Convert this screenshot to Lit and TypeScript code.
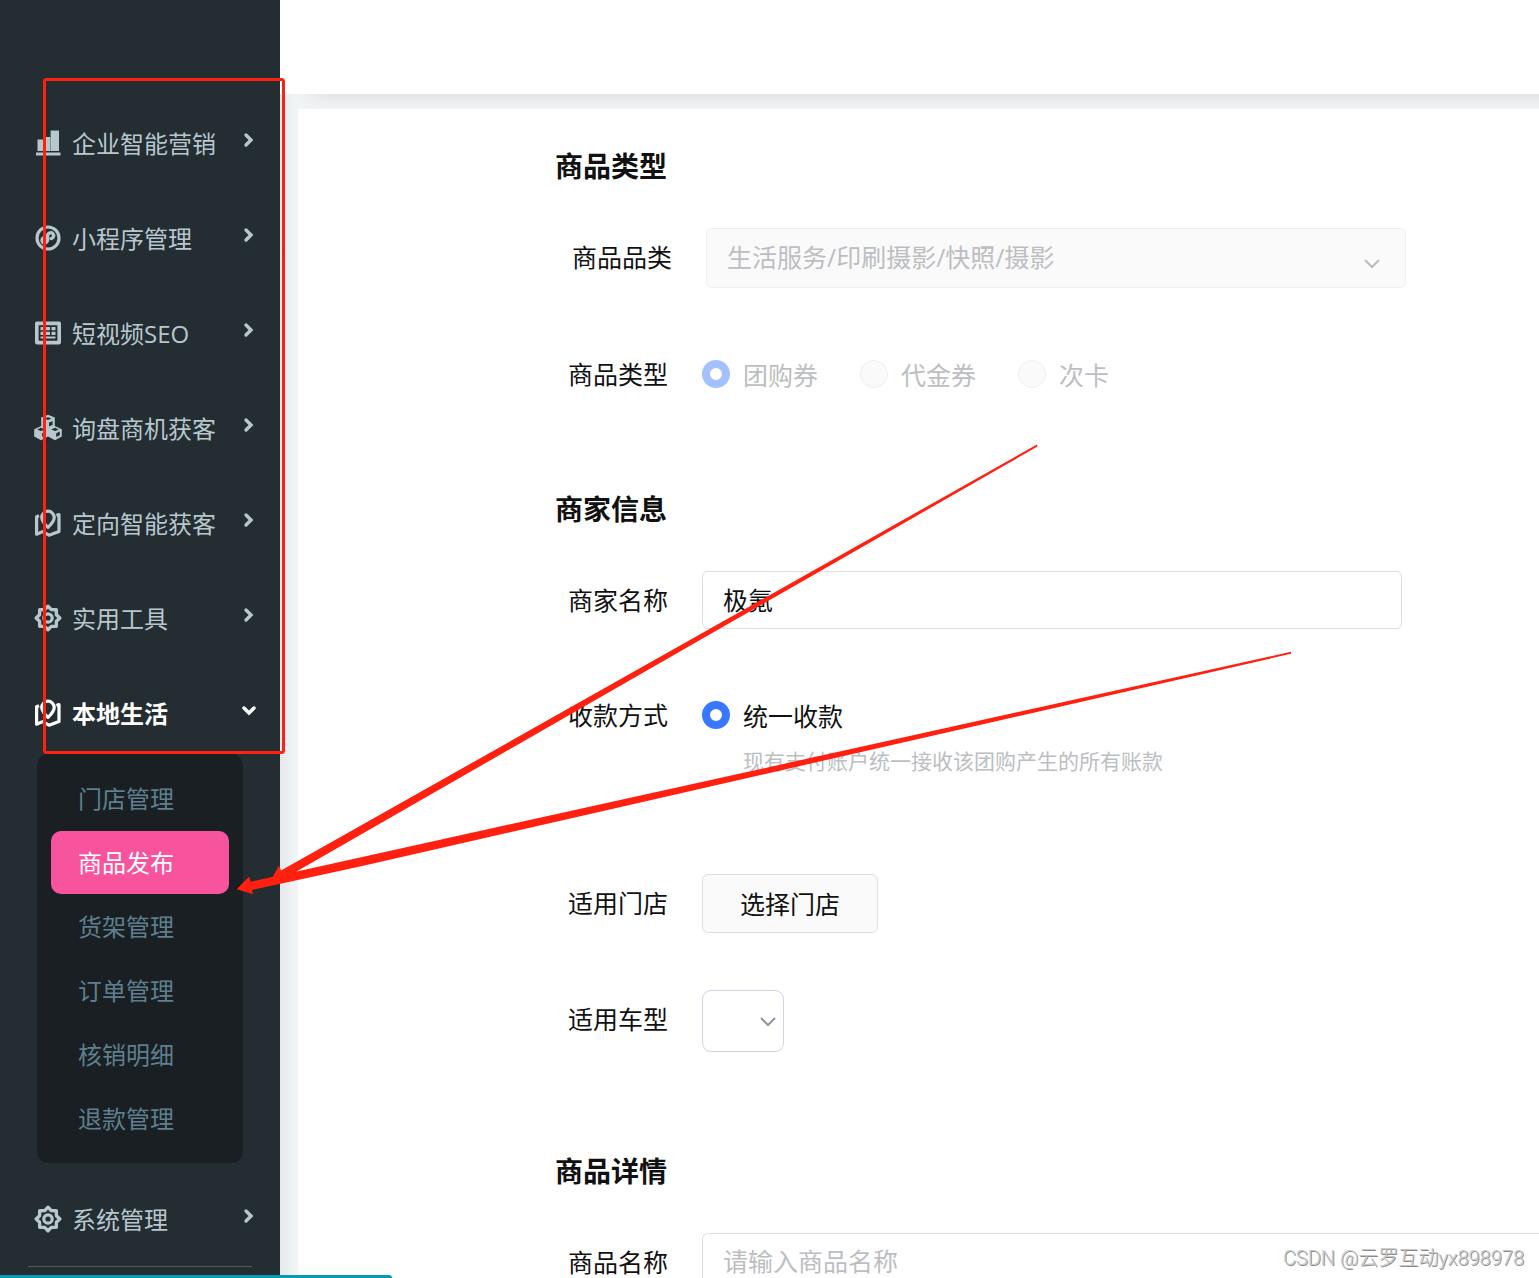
import { LitElement, html, css, svg, type TemplateResult } from "lit";
import { customElement, property } from "lit/decorators.js";

const gear = svg`<path d="M14 2.2 17.3 5.6 22.3 5.7 22.4 10.7 25.8 14 22.4 17.3 22.3 22.3 17.3 22.4 14 25.8 10.7 22.4 5.7 22.3 5.6 17.3 2.2 14 5.6 10.7 5.7 5.7 10.7 5.6Z" fill="none" stroke="currentColor" stroke-width="3.4" stroke-linejoin="round"/><circle cx="14" cy="14" r="4.2" fill="none" stroke="currentColor" stroke-width="3.2"/>`;

const pin = svg`<g fill="none" stroke="currentColor" stroke-width="3.2" stroke-linejoin="round"><path d="M14 18.4C10 14.400 7.800 12 7.800 8.400a6.200 6.200 0 0 1 12.400 0c0 3.600-2.200 6-6.200 10Z"/><path d="M5 6.800 2.600 7.800v17.400l6-2.600 6.400 3.600 10-3.800V5.600l-2.600 1"/></g>`;

const icons: Record<string, TemplateResult> = {
  chart: svg`<path fill="currentColor" d="M3.500 10.500H9V22H3.500ZM10 8h6v14h-6ZM16.600 1.500H25V22h-8.400ZM2 23.500h24.500v3H2Z"/><path fill="currentColor" fill-opacity=".7" d="M9 10.500h1V22H9ZM16 8h.6v14H16Z"/>`,
  mini: svg`<circle cx="14" cy="14" r="11" fill="none" stroke="currentColor" stroke-width="3.200"/><path d="M10.200 13.400c-2.200.8-2.800 3.200-1.600 4.600 1.800 1.800 5 .6 5-2.400v-3.400c0-3.200 3.400-4.400 5.200-2.600 1.600 1.600.8 4.400-1.600 5" fill="none" stroke="currentColor" stroke-width="3.400" stroke-linecap="round"/>`,
  table: svg`<rect x="2.800" y="4.400" width="22.400" height="19.200" fill="none" stroke="currentColor" stroke-width="3.600" stroke-linejoin="round"/><path fill="currentColor" d="M6.500 8h4v3.200h-4Zm5.500 0h4v3.200h-4Zm5.500 0h4v3.200h-4Zm-11 4.800h4V16h-4Zm5.500 0h4V16h-4Zm5.500 0h4V16h-4ZM6.500 17.600h15v2h-15Z"/>`,
  cubes: svg`<path fill="currentColor" fill-rule="evenodd" d="M14 .8 20.800 3.600V12l7 3.200v7.200L21 26.200l-7-3.600-7 3.600-6.800-3.800v-7.200L7.200 12V3.600Zm0 2.400-3.600 1.400L14 6l3.600-1.400ZM18.600 7.200 15 8.600v3.800l3.600-1.600ZM7 13.800l-3.800 1.600L7 17l3.800-1.600Zm14 0-3.800 1.600L21 17l3.800-1.600ZM11.800 17.600 8.200 19.200v3.800l3.600-1.800Zm14 0-3.600 1.600v3.800l3.600-1.800Z"/>`,
  pin,
  gear,
};

interface MenuItem {
  label: string;
  icon: string;
  children?: string[];
}

const menu: MenuItem[] = [
  { label: "企业智能营销", icon: "chart" },
  { label: "小程序管理", icon: "mini" },
  { label: "短视频SEO", icon: "table" },
  { label: "询盘商机获客", icon: "cubes" },
  { label: "定向智能获客", icon: "pin" },
  { label: "实用工具", icon: "gear" },
  {
    label: "本地生活",
    icon: "pin",
    children: ["门店管理", "商品发布", "货架管理", "订单管理", "核销明细", "退款管理"],
  },
  { label: "系统管理", icon: "gear" },
];

@customElement("side-menu")
export class SideMenu extends LitElement {
  @property() current = "商品发布";

  static styles = css`
    :host {
      display: block;
      background: #232d32;
      padding-top: 95px;
    }
    .item {
      display: grid;
      grid-template-columns: 28px 1fr 16px;
      align-items: center;
      column-gap: 10px;
      box-sizing: border-box;
      width: 100%;
      height: 95px;
      padding: 0 23px 0 34px;
      border: 0;
      background: none;
      color: #b8c7ce;
      font: inherit;
      font-size: 24px;
      text-align: left;
      cursor: pointer;
    }
    .open {
      color: #fff;
      font-weight: 700;
    }
    .icon {
      width: 28px;
      height: 28px;
    }
    .arrow {
      width: 16px;
      height: 16px;
      margin-bottom: 6px;
    }
    .sub {
      list-style: none;
      margin: -6px 37px 8px;
      padding: 13px 14px 12px;
      border-radius: 12px;
      background: #191f22;
    }
    .link {
      display: block;
      height: 63px;
      margin-bottom: 1px;
      padding-left: 27px;
      border-radius: 10px;
      color: #5f7f8e;
      font-size: 24px;
      line-height: 63px;
      text-decoration: none;
    }
    .active {
      background: #f8549e;
      color: #fff;
    }
    .rule {
      margin: 0 28px;
      border: 0;
      border-top: 1px solid #51595b;
    }
  `;

  render() {
    return html`<nav aria-label="主菜单">
      ${menu.map(
        (m) => html`<button class="item ${m.children ? "open" : ""}" aria-expanded=${m.children ? "true" : "false"}>
            <svg class="icon" viewBox="0 0 28 28" aria-hidden="true">${icons[m.icon]}</svg>
            <span>${m.label}</span>
            <svg class="arrow" viewBox="0 0 16 16" aria-hidden="true">
              <path
                d=${m.children ? "M3 6l5 5 5-5" : "M5 3l5 5-5 5"}
                fill="none"
                stroke="currentColor"
                stroke-width="3.4"
                stroke-linecap="round"
              />
            </svg>
          </button>
          ${m.children
            ? html`<ul class="sub">
                ${m.children.map(
                  (c) => html`<li><a href="#" class="link ${c === this.current ? "active" : ""}">${c}</a></li>`
                )}
              </ul>`
            : ""}`
      )}
      <hr class="rule" />
    </nav>`;
  }
}

const chevron = html`<svg class="chevron" viewBox="0 0 16 10" aria-hidden="true">
  <path d="M1 1l7 7 7-7" fill="none" stroke="currentColor" stroke-width="2" />
</svg>`;

@customElement("product-form")
export class ProductForm extends LitElement {
  static styles = css`
    :host {
      display: block;
      background: #fff;
      padding: 37px 0 0 257px;
      color: #111;
    }
    .section {
      display: flex;
      flex-direction: column;
      gap: 57px;
      margin-bottom: 86px;
    }
    .wide {
      margin-bottom: 99px;
    }
    .title {
      margin: 0 0 -15px;
      font-size: 28px;
      line-height: 40px;
      font-weight: 700;
    }
    .row {
      display: grid;
      grid-template-columns: 113px 1fr;
      column-gap: 34px;
      font-size: 25px;
    }
    .indent {
      padding-left: 4px;
    }
    .label {
      height: 58px;
      line-height: 58px;
      text-align: right;
      white-space: nowrap;
    }
    .field {
      display: flex;
      flex-wrap: wrap;
      align-items: center;
      min-height: 58px;
    }
    .box {
      box-sizing: border-box;
      width: 100%;
      max-width: 700px;
      height: 58px;
      padding: 0 20px 2px;
      border: 1px solid #dfe0e3;
      border-radius: 6px;
      background: #fff;
      color: #111;
      font: inherit;
    }
    .box::placeholder {
      color: #bcbec2;
      opacity: 1;
    }
    .full {
      max-width: none;
      border-right: 0;
      border-radius: 6px 0 0 0;
    }
    .picker {
      position: relative;
      display: flex;
      width: 100%;
      max-width: 700px;
    }
    .picker select {
      appearance: none;
      height: 60px;
      opacity: 1;
    }
    .picker select:disabled {
      border-color: #eeeff0;
      background: #fafafa;
      color: #bcbec2;
    }
    .picker.small {
      max-width: 82px;
    }
    .small select {
      height: 62px;
      border-color: #d4d2e3;
      border-radius: 9px;
    }
    .chevron {
      position: absolute;
      right: 26px;
      top: 31px;
      width: 16px;
      height: 10px;
      color: #b9bbbf;
      pointer-events: none;
    }
    .small .chevron {
      right: 8px;
      top: 27px;
      color: #92959b;
    }
    .choices {
      display: flex;
      align-items: center;
      gap: 42px;
      width: 100%;
      height: 58px;
    }
    .choice {
      display: flex;
      align-items: center;
      gap: 13px;
    }
    .radio {
      appearance: none;
      box-sizing: border-box;
      width: 28px;
      height: 28px;
      margin: 0;
      border: 1px solid #dfe0e3;
      border-radius: 50%;
      background: #fff;
    }
    .radio:checked {
      border: 8px solid #3877ff;
    }
    .radio:disabled {
      border-color: #eeeff0;
      background: #fafafa;
    }
    .radio:disabled:checked {
      border-color: #a4c0ff;
      background: #fff;
    }
    .muted {
      color: #bcbec2;
    }
    .hint {
      margin: 2px 0 41px 41px;
      color: #bcbec2;
      font-size: 21px;
      line-height: 30px;
    }
    .button {
      height: 59px;
      padding: 0 37px 2px;
      border: 1px solid #dfe0e3;
      border-radius: 6px;
      background: #fafafa;
      color: #111;
      font: inherit;
    }
  `;

  render() {
    return html`
      <section class="section">
        <h2 class="title">商品类型</h2>
        <div class="row indent">
          <label class="label" for="category">商品品类</label>
          <div class="field">
            <div class="picker">
              <select class="box" id="category" disabled>
                <option>生活服务/印刷摄影/快照/摄影</option>
              </select>
              ${chevron}
            </div>
          </div>
        </div>
        <div class="row">
          <span class="label" id="kind">商品类型</span>
          <div class="field">
            <div class="choices muted" role="radiogroup" aria-labelledby="kind">
              ${["团购券", "代金券", "次卡"].map(
                (name, i) => html`<label class="choice">
                  <input class="radio" type="radio" name="kind" disabled ?checked=${i === 0} />
                  <span>${name}</span>
                </label>`
              )}
            </div>
          </div>
        </div>
      </section>
      <section class="section wide">
        <h2 class="title">商家信息</h2>
        <div class="row">
          <label class="label" for="merchant">商家名称</label>
          <div class="field"><input class="box" id="merchant" type="text" value="极氪" /></div>
        </div>
        <div class="row">
          <span class="label" id="payment">收款方式</span>
          <div class="field">
            <div class="choices" role="radiogroup" aria-labelledby="payment">
              <label class="choice">
                <input class="radio" type="radio" name="payment" checked />
                <span>统一收款</span>
              </label>
            </div>
            <p class="hint">现有支付账户统一接收该团购产生的所有账款</p>
          </div>
        </div>
        <div class="row">
          <label class="label" for="stores">适用门店</label>
          <div class="field"><button class="button" id="stores" type="button">选择门店</button></div>
        </div>
        <div class="row">
          <label class="label" for="model">适用车型</label>
          <div class="field">
            <div class="picker small">
              <select class="box" id="model">
                <option></option>
              </select>
              ${chevron}
            </div>
          </div>
        </div>
      </section>
      <section class="section">
        <h2 class="title">商品详情</h2>
        <div class="row">
          <label class="label" for="name">商品名称</label>
          <div class="field"><input class="box full" id="name" type="text" placeholder="请输入商品名称" /></div>
        </div>
      </section>
    `;
  }
}

@customElement("app-root")
export class AppRoot extends LitElement {
  static styles = css`
    :host {
      display: block;
      position: relative;
      height: 100vh;
      overflow: hidden;
      font-family: "Open Sans", "Noto Sans CJK SC", sans-serif;
    }
    .shell {
      display: grid;
      grid-template-columns: 280px minmax(0, 1fr);
      height: 100%;
    }
    .main {
      display: flex;
      flex-direction: column;
      min-width: 0;
      min-height: 0;
      background: linear-gradient(90deg, #e6e8e9, #f1f5f6 16px);
    }
    .header {
      position: relative;
      flex: none;
      height: 94px;
      background: #fff;
      box-shadow: 24px 6px 20px -6px rgba(0, 0, 0, 0.13);
    }
    .page {
      flex: 1;
      margin: 15px 0 0 18px;
    }
    .marks {
      position: absolute;
      left: 0;
      top: 0;
      width: 1539px;
      height: 1278px;
      pointer-events: none;
    }
    .status {
      position: absolute;
      left: 0;
      bottom: 0;
      width: 392px;
      height: 3px;
      border-radius: 0 3px 0 0;
      background: #0a98b8;
    }
    .credit {
      position: absolute;
      right: 15px;
      bottom: 5px;
      color: #c8c8c8;
      font-family: Roboto, "Noto Sans CJK SC", sans-serif;
      font-size: 20px;
      font-weight: 300;
      line-height: 30px;
      text-shadow: 1px 1px 0 #8c8c8c;
    }
  `;

  render() {
    return html`
      <div class="shell">
        <side-menu></side-menu>
        <main class="main">
          <header class="header"></header>
          <product-form class="page"></product-form>
        </main>
      </div>
      <svg class="marks" viewBox="0 0 1539 1278" aria-hidden="true">
        <rect x="44.500" y="79.500" width="239" height="673" rx="2" fill="none" stroke="#ff2010" stroke-width="3" />
        <path
          fill="#ff2010"
          d="M1037 444.500 281 870.500 279 865.500 272 878 283 882 286 877.500 1037.500 446.500ZM1291 651.800 360 857.500 250.700 881.700 249 876.700 236.700 889.300 253.300 894.300 251.700 890 360 866.500 1291 653.800Z"
        />
      </svg>
      <div class="status"></div>
      <div class="credit">CSDN @云罗互动yx898978</div>
    `;
  }
}
